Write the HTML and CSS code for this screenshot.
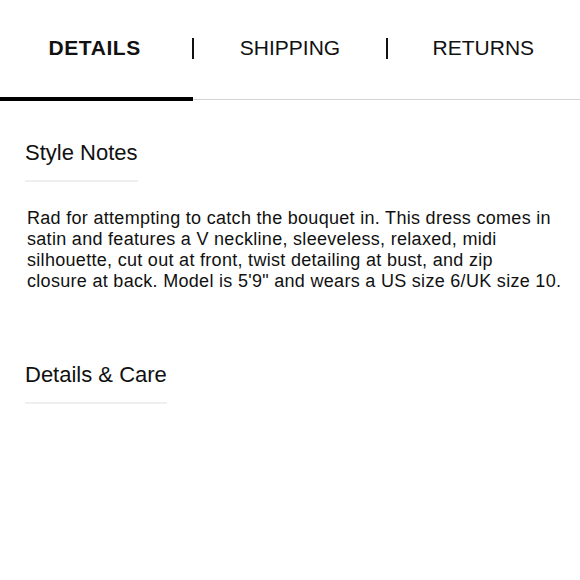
FILE: index.html
```html
<!DOCTYPE html>
<html>
<head>
<meta charset="utf-8">
<link rel="stylesheet" href="styles.css">
</head>
<body>
<nav class="tabs">
  <div class="tab active">DETAILS</div>
  <div class="tab sep">SHIPPING</div>
  <div class="tab sep">RETURNS</div>
</nav>
<section class="panel">
  <h2 class="heading">Style Notes</h2>
  <p class="body-text">Rad for attempting to catch the bouquet in. This dress comes in satin and features a V neckline, sleeveless, relaxed, midi silhouette, cut out at front, twist detailing at bust, and zip<br>closure at back. Model is 5'9" and wears a US size 6/UK size 10.</p>
  <h2 class="heading second">Details &amp; Care</h2>
</section>
</body>
</html>
```

FILE: styles.css
```css
html, body {
  margin: 0;
  padding: 0;
  background: #fff;
}
body {
  font-family: "Liberation Sans", Arial, sans-serif;
  color: #111;
}
.tabs {
  display: grid;
  grid-template-columns: 1fr 1fr 1fr;
  height: 99px;
  border-bottom: 1px solid #d4d4d4;
}
.tab {
  position: relative;
  text-align: center;
  padding-top: 36px;
  font-size: 21px;
  line-height: 24px;
  color: #111;
}
.tab.active {
  font-weight: bold;
  letter-spacing: 0.6px;
  padding-right: 4px;
}
.tab.active::after {
  content: "";
  position: absolute;
  left: 0;
  right: 0;
  bottom: -2px;
  height: 4px;
  background: #000;
}
.tab.sep::before {
  content: "";
  position: absolute;
  left: -1px;
  top: 38px;
  width: 2px;
  height: 21px;
  background: #111;
}
.panel {
  padding: 0 12px 0 25px;
}
.heading {
  display: inline-block;
  margin: 40px 0 0;
  padding-bottom: 14px;
  border-bottom: 2px solid #efefef;
  font-size: 22px;
  font-weight: normal;
  line-height: 26px;
}
.body-text {
  margin: 26px 0 0 2px;
  font-size: 18px;
  line-height: 21px;
  letter-spacing: 0.3px;
}
.heading.second {
  margin-top: 70px;
}
```
